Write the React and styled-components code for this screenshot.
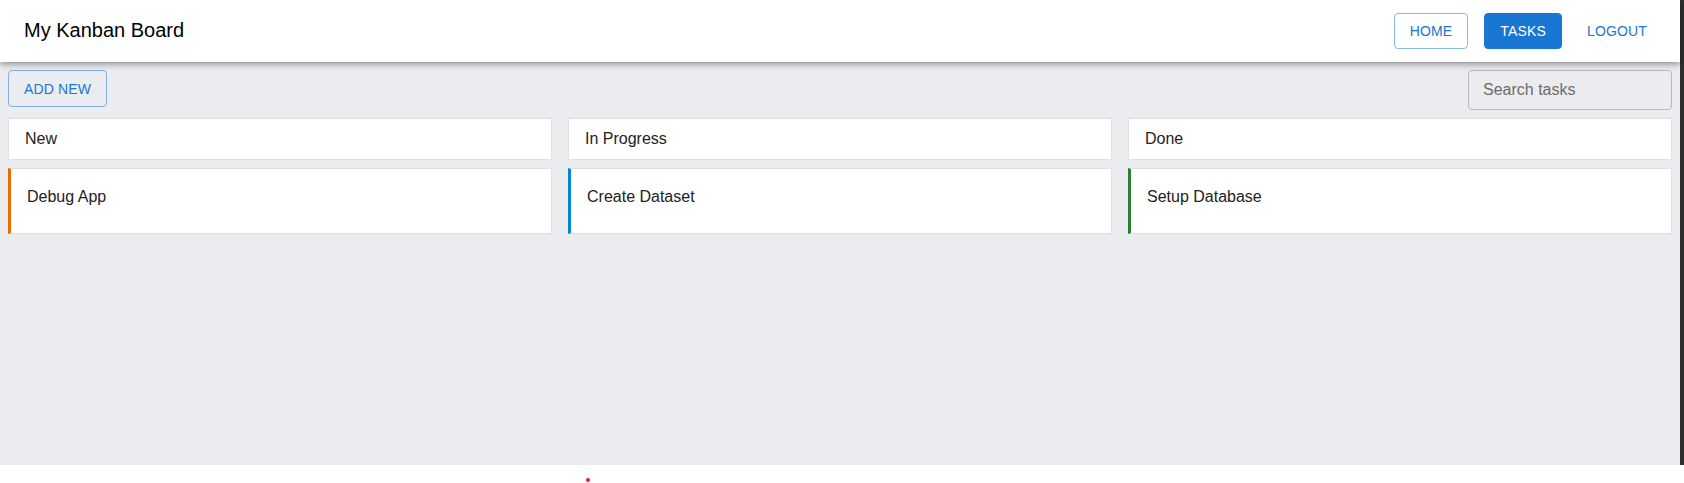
import styled, { createGlobalStyle } from "styled-components";

const GlobalStyle = createGlobalStyle`
  body {
    margin: 0;
    background: #ffffff;
    font-family: "Liberation Sans", Arial, sans-serif;
  }
  * { box-sizing: border-box; }
`

const Frame = styled.div`
  display: flex;
  width: 1684px;
  height: 465px;
`

const Page = styled.div`
  width: 1680px;
  height: 100%;
  background: #ebecf0;
  display: flex;
  flex-direction: column;
`

const ScrollStrip = styled.div`
  width: 4px;
  height: 100%;
  background: #2f2f2f;
`

const Header = styled.header`
  height: 62px;
  flex-shrink: 0;
  background: #fff;
  display: flex;
  align-items: center;
  justify-content: space-between;
  padding: 0 24px;
  box-shadow: 0px 2px 4px -1px rgba(0,0,0,0.2), 0px 4px 5px 0px rgba(0,0,0,0.14), 0px 1px 10px 0px rgba(0,0,0,0.12);
  position: relative;
  z-index: 1;
`

const Title = styled.div`
  font-size: 20px;
  color: #000;
  margin-top: -2px;
`

const Nav = styled.nav`
  display: flex;
  gap: 16px;
  align-items: center;
`

const NavButton = styled.button`
  font-family: "Liberation Sans", Arial, sans-serif;
  font-size: 14px;
  letter-spacing: 0.15px;
  text-transform: uppercase;
  height: 36px;
  border-radius: 4px;
  cursor: pointer;
  padding: ${p => p.$variant === "text" ? "0 8px" : "0 15px"};
  color: ${p => p.$variant === "contained" ? "#fff" : "#1976d2"};
  background: ${p => p.$variant === "contained" ? "#1976d2" : "transparent"};
  border: 1px solid ${p =>
    p.$variant === "outlined" ? "rgba(25,118,210,0.5)" :
    p.$variant === "contained" ? "#1976d2" : "transparent"};
`

const Content = styled.main`
  padding: 8px;
  display: flex;
  flex-direction: column;
  gap: 8px;
`

const Toolbar = styled.div`
  display: flex;
  justify-content: space-between;
  align-items: flex-start;
`

const AddButton = styled(NavButton)`
  height: 37px;
`

const Search = styled.input`
  width: 204px;
  height: 40px;
  border: 1px solid #b8b9bd;
  border-radius: 4px;
  background: transparent;
  padding: 0 14px;
  font-family: "Liberation Sans", Arial, sans-serif;
  font-size: 16px;
  color: #222;
  outline: none;
  &::placeholder { color: #6b6b6b; }
`

const Board = styled.div`
  display: grid;
  grid-template-columns: repeat(3, 1fr);
  gap: 16px;
`

const Column = styled.section`
  display: flex;
  flex-direction: column;
  gap: 8px;
`

const ColumnHead = styled.div`
  background: #fff;
  border: 1px solid #dfe0e3;
  padding: 8px 16px;
  font-size: 16px;
  line-height: 24px;
  color: #222;
`

const Card = styled.div`
  background: #fff;
  border: 1px solid #dfe0e3;
  border-left: 3px solid ${p => p.$accent};
  padding: 16px 16px 24px 16px;
  font-size: 16px;
  line-height: 24px;
  color: #222;
`

const Below = styled.div`
  height: 18px;
  padding: 13px 0 0 586px;
`

const Dot = styled.div`
  width: 4px;
  height: 4px;
  border-radius: 50%;
  background: #f01818;
`

const columns = [
  { name: "New", tasks: [{ title: "Debug App", color: "#ed6c02" }] },
  { name: "In Progress", tasks: [{ title: "Create Dataset", color: "#0288d1" }] },
  { name: "Done", tasks: [{ title: "Setup Database", color: "#2e7d32" }] },
]

export default function App() {
  return (
    <>
      <GlobalStyle />
      <Frame>
        <Page>
          <Header>
            <Title>My Kanban Board</Title>
            <Nav>
              <NavButton $variant="outlined">Home</NavButton>
              <NavButton $variant="contained">Tasks</NavButton>
              <NavButton $variant="text">Logout</NavButton>
            </Nav>
          </Header>
          <Content>
            <Toolbar>
              <AddButton $variant="outlined">Add New</AddButton>
              <Search placeholder="Search tasks" />
            </Toolbar>
            <Board>
              {columns.map(col => (
                <Column key={col.name}>
                  <ColumnHead>{col.name}</ColumnHead>
                  {col.tasks.map(t => (
                    <Card key={t.title} $accent={t.color}>{t.title}</Card>
                  ))}
                </Column>
              ))}
            </Board>
          </Content>
        </Page>
        <ScrollStrip />
      </Frame>
      <Below><Dot /></Below>
    </>
  )
}
